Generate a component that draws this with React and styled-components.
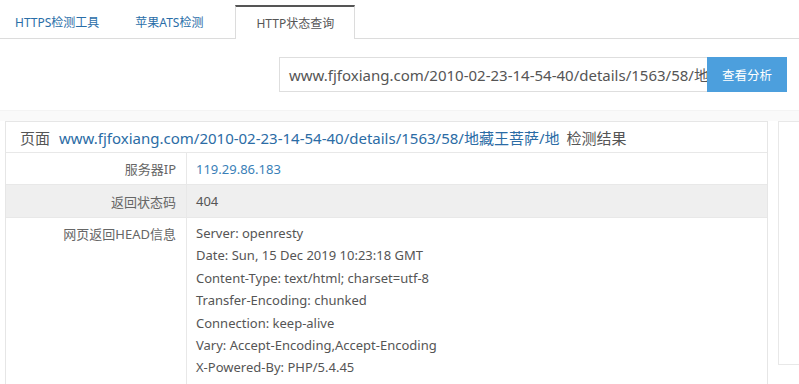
import React from "react";
import styled, { createGlobalStyle } from "styled-components";

const Global = createGlobalStyle`
  html, body { margin: 0; padding: 0; background: #fff; overflow: hidden; }
  body { font-family: "Noto Sans", "Noto Sans CJK SC", sans-serif; color: #555; }
`;

const Page = styled.div`
  width: 799px;
  height: 384px;
  overflow: hidden;
`;

const TabBar = styled.div`
  display: flex;
  align-items: flex-end;
  height: 39px;
  box-sizing: border-box;
  border-bottom: 1px solid #dcdcdc;
`;

const Tab = styled.div`
  height: ${(p) => (p.$active ? "34px" : "33px")};
  box-sizing: border-box;
  display: flex;
  align-items: center;
  padding: 0 ${(p) => p.$pad || 19}px;
  margin-right: ${(p) => p.$mr || 0}px;
  font-size: 12px;
  color: ${(p) => (p.$active ? "#555" : "#2a6ea8")};
  background: #fff;
  margin-bottom: ${(p) => (p.$active ? "-1px" : "0")};
  border: ${(p) => (p.$active ? "1px solid #dcdcdc" : "none")};
  border-top: ${(p) => (p.$active ? "2px solid #555" : "none")};
  border-bottom: none;
`;

const SearchRow = styled.div`
  display: flex;
  justify-content: flex-end;
  padding: 18px 12px 0 0;
  height: 71px;
  box-sizing: border-box;
`;

const Input = styled.div`
  width: 428px;
  height: 35px;
  box-sizing: border-box;
  border: 1px solid #dedede;
  border-right: none;
  padding-left: 9px;
  display: flex;
  align-items: center;
  font-size: 15px;
  color: #555;
  white-space: nowrap;
  overflow: hidden;
`;

const Button = styled.div`
  width: 80px;
  height: 35px;
  background: #4c9fdd;
  color: #fff;
  font-size: 12.5px;
  display: flex;
  align-items: center;
  justify-content: center;
`;

const Content = styled.div`
  display: flex;
  gap: 10px;
  padding: 10px 0 0 5px;
  border-top: 1px solid #f4f4f4;
  background: linear-gradient(#fafafa, #fafafa 10px, #fff 10px);
`;

const Panel = styled.div`
  width: 763px;
  flex-shrink: 0;
  box-sizing: border-box;
  border: 1px solid #e6e6e6;
  border-bottom: none;
  background: #fff;
`;

const Side = styled.div`
  width: 40px;
  flex-shrink: 0;
  height: 244px;
  box-sizing: border-box;
  border: 1px solid #e8e8e8;
  background: #fff;
`;

const Header = styled.div`
  height: 31px;
  box-sizing: border-box;
  border-bottom: 1px solid #e8e8e8;
  display: flex;
  align-items: center;
  padding-left: 14px;
  font-size: 15px;
  color: #555;
  white-space: nowrap;
`;

const Link = styled.span`
  color: #2b6ca5;
  margin: 0 7px 0 9px;
`;

const Row = styled.div`
  display: flex;
  min-height: ${(p) => p.$h || 31}px;
  background: ${(p) => (p.$alt ? "#efefef" : "#fff")};
  border-bottom: 1px solid ${(p) => (p.$last ? "transparent" : "#e8e8e8")};
  font-size: 13px;
`;

const Label = styled.div`
  width: 181px;
  flex-shrink: 0;
  box-sizing: border-box;
  border-right: 1px solid #e8e8e8;
  padding: ${(p) => (p.$top ? "6px" : "0")} 10px 0 0;
  display: flex;
  align-items: ${(p) => (p.$top ? "flex-start" : "center")};
  justify-content: flex-end;
  color: #666;
`;

const Value = styled.div`
  padding-left: 9px;
  display: flex;
  align-items: center;
  color: ${(p) => p.$color || "#555"};
`;

const HeadList = styled.div`
  padding: 4px 0 0 9px;
  line-height: 22.4px;
  color: #555;
`;

const headLines = [
  "Server: openresty",
  "Date: Sun, 15 Dec 2019 10:23:18 GMT",
  "Content-Type: text/html; charset=utf-8",
  "Transfer-Encoding: chunked",
  "Connection: keep-alive",
  "Vary: Accept-Encoding,Accept-Encoding",
  "X-Powered-By: PHP/5.4.45",
];

export default function App() {
  const url = "www.fjfoxiang.com/2010-02-23-14-54-40/details/1563/58/地藏王菩萨/地";
  return (
    <Page>
      <Global />
      <TabBar>
        <Tab $pad={15}>HTTPS检测工具</Tab>
        <Tab $pad={21} $mr={11}>苹果ATS检测</Tab>
        <Tab $active $pad={20}>HTTP状态查询</Tab>
      </TabBar>
      <SearchRow>
        <Input>{url}</Input>
        <Button>查看分析</Button>
      </SearchRow>
      <Content>
        <Panel>
          <Header>
            页面<Link>{url}</Link>检测结果
          </Header>
          <Row>
            <Label>服务器IP</Label>
            <Value $color="#3a7fb8">119.29.86.183</Value>
          </Row>
          <Row $alt $h={32}>
            <Label>返回状态码</Label>
            <Value>404</Value>
          </Row>
          <Row $last $h={170}>
            <Label $top>网页返回HEAD信息</Label>
            <HeadList>
              {headLines.map((l) => (
                <div key={l}>{l}</div>
              ))}
            </HeadList>
          </Row>
        </Panel>
        <Side />
      </Content>
    </Page>
  );
}
